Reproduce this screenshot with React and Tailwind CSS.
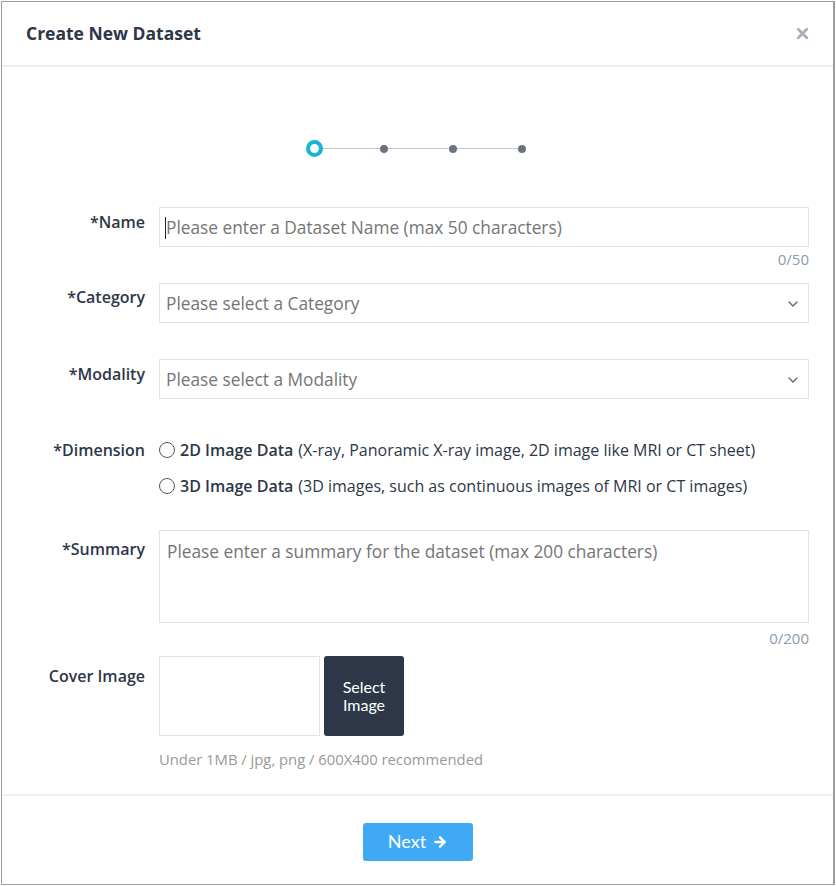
import { ChevronDown, ArrowRight, X } from 'lucide-react';

const FONT = { fontFamily: '"Open Sans", "Noto Sans", sans-serif' };

function Label({ children, top }) {
    return (
        <div className={`w-[143px] shrink-0 text-right text-[16px] font-semibold leading-6 text-[#2d3748] ${top}`}>
            {children}
        </div>
    );
}

function Select({ placeholder }) {
    return (
        <div className="w-[650px] h-10 border border-[#e3e3e3] flex items-center pl-[6px] pr-[7px] pt-px">
            <span className="flex-1 text-[17.3px] text-[#757575]">{placeholder}</span>
            <ChevronDown className="w-4 h-4 text-[#666]" strokeWidth={2} />
        </div>
    );
}

function Radio({ bold, rest }) {
    return (
        <div className="flex items-center h-9 text-[16px] text-[#2d3748]">
            <span className="w-4 h-4 rounded-full border border-[#555] bg-white mr-[5px]" />
            <span className="font-semibold">{bold}</span>
            <span className="ml-[5px]">{rest}</span>
        </div>
    );
}

export default function App() {
    return (
        <div className="w-[836px] h-[886px] bg-white p-px" style={FONT}>
            <div className="w-[834px] h-[884px] border border-r-2 border-[#9c9c9c] flex flex-col">
                {/* Header */}
                <div className="h-[65px] shrink-0 flex items-center justify-between pl-[24px] pr-[22px] border-b-2 border-[#efefef]">
                    <h1 className="text-[17.5px] font-bold text-[#2d3748]">Create New Dataset</h1>
                    <X className="w-[17px] h-[17px] text-[#a9b0bb]" strokeWidth={4} />
                </div>

                {/* Body */}
                <div className="flex-1 pt-[73px]">
                    {/* Stepper */}
                    <div className="flex items-center justify-center pr-[4px] mb-[50px]">
                        <span className="w-[17px] h-[17px] rounded-full border-[4px] border-[#19b4d1]" />
                        <span className="w-[57px] h-px bg-[#c4c4cc]" />
                        <span className="w-2 h-2 rounded-full bg-[#6b7280]" />
                        <span className="w-[61px] h-px bg-[#c4c4cc]" />
                        <span className="w-2 h-2 rounded-full bg-[#6b7280]" />
                        <span className="w-[61px] h-px bg-[#c4c4cc]" />
                        <span className="w-2 h-2 rounded-full bg-[#6b7280]" />
                    </div>

                    {/* Name */}
                    <div className="flex gap-[14px]">
                        <Label top="pt-[3px]">*Name</Label>
                        <div className="w-[650px]">
                            <div className="h-10 border border-[#e3e3e3] flex items-center pl-[5px] pt-[2px]">
                                <span className="w-px h-[22px] bg-[#222]" />
                                <span className="text-[17.3px] text-[#757575]">Please enter a Dataset Name (max 50 characters)</span>
                            </div>
                            <div className="text-right text-[15px] leading-5 text-[#8b9bb0] mt-[2px]">0/50</div>
                        </div>
                    </div>

                    {/* Category */}
                    <div className="flex gap-[14px] mt-[14px]">
                        <Label top="pt-[2px]">*Category</Label>
                        <Select placeholder="Please select a Category" />
                    </div>

                    {/* Modality */}
                    <div className="flex gap-[14px] mt-9">
                        <Label top="pt-[3px]">*Modality</Label>
                        <Select placeholder="Please select a Modality" />
                    </div>

                    {/* Dimension */}
                    <div className="flex gap-[14px] mt-[33px]">
                        <Label top="pt-[6px]">*Dimension</Label>
                        <div>
                            <Radio bold="2D Image Data" rest="(X-ray, Panoramic X-ray image, 2D image like MRI or CT sheet)" />
                            <Radio bold="3D Image Data" rest="(3D images, such as continuous images of MRI or CT images)" />
                        </div>
                    </div>

                    {/* Summary */}
                    <div className="flex gap-[14px] mt-[26px]">
                        <Label top="pt-[7px]">*Summary</Label>
                        <div className="w-[650px]">
                            <div className="h-[93px] border border-[#e3e3e3] pl-[7px] pt-[8px]">
                                <span className="text-[17.3px] text-[#757575]">Please enter a summary for the dataset (max 200 characters)</span>
                            </div>
                            <div className="text-right text-[15px] leading-5 text-[#8b9bb0] mt-[5px]">0/200</div>
                        </div>
                    </div>

                    {/* Cover image */}
                    <div className="flex gap-[14px] mt-[8px]">
                        <Label top="pt-[8px]">Cover Image</Label>
                        <div>
                            <div className="flex gap-[4px]">
                                <div className="w-[161px] h-20 border border-[#e3e3e3]" />
                                <button className="w-20 h-20 rounded-[3px] bg-[#2d3748] text-white text-[16px] leading-[18px]" style={{ fontFamily: '"Lato", "Open Sans", sans-serif' }}>
                                    Select<br />Image
                                </button>
                            </div>
                            <p className="mt-[13px] text-[14.8px] leading-5 text-[#999]">Under 1MB / jpg, png / 600X400 recommended</p>
                        </div>
                    </div>
                </div>

                {/* Footer */}
                <div className="h-[90px] shrink-0 border-t-2 border-[#efefef] flex items-center justify-center pt-[3px]">
                    <button className="w-[110px] h-[38px] rounded-[3px] bg-[#3fa9f5] text-white text-[18px] flex items-center justify-center gap-[6px] ml-[1px]" style={{ fontFamily: '"Lato", "Open Sans", sans-serif' }}>
                        Next
                        <ArrowRight className="w-4 h-4" strokeWidth={3.5} />
                    </button>
                </div>
            </div>
        </div>
    );
}
